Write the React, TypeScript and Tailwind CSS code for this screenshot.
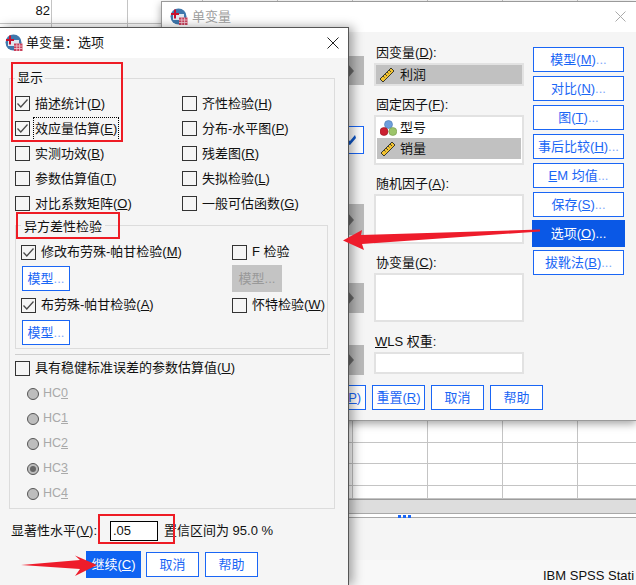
import React from 'react';

const rowLabel = (text: string, key: string, after = '') => (
    <>
        {text}(<u>{key}</u>){after}
    </>
);

const Dots = () => <span className="text-[#7fa8fb]">...</span>;

const AppIcon = () => (
    <svg width="18" height="18" viewBox="0 0 18 18" className="shrink-0">
        <circle cx="8.5" cy="8.5" r="8" fill="#3f78ad" />
        <path d="M3 6h11v6H3z" fill="#dfe8f0" />
        <path d="M1 5h8V7H1zM4 1.5h2v9H4z" fill="#c8102e" />
        <path d="M9 9.5h8.5V17H9z" fill="#c9405a" />
        <path d="M9 12h8.5M9 14.5h8.5M11.8 9.5V17M14.6 9.5V17" stroke="#f3cdd5" strokeWidth="0.8" />
    </svg>
);

const RulerIcon = () => (
    <svg width="16" height="16" viewBox="0 0 16 16" className="shrink-0">
        <path d="M1 12 12 1l3 3L4 15z" fill="#f2c230" stroke="#3a3a2a" strokeWidth="1" />
        <path d="M4 9l1.5 1.5M6 7l2 2M8 5l1.5 1.5M10 3l2 2" stroke="#3a3a2a" strokeWidth="0.9" />
    </svg>
);

const NominalIcon = () => (
    <svg width="17" height="16" viewBox="0 0 17 16" className="shrink-0">
        <circle cx="8.5" cy="4.5" r="4" fill="#6f9fdc" stroke="#4a78b0" strokeWidth="0.6" />
        <circle cx="4" cy="11.5" r="4" fill="#cc2030" stroke="#98141f" strokeWidth="0.6" />
        <circle cx="12.8" cy="11.5" r="4" fill="#9cc46a" stroke="#74984a" strokeWidth="0.6" />
    </svg>
);

const Check = ({ checked = false, focus = false, children }: { checked?: boolean; focus?: boolean; children: React.ReactNode }) => (
    <div className="flex items-center h-[14px] whitespace-nowrap">
        <span className="w-[15px] h-[15px] shrink-0 border border-[#333] flex items-center justify-center">
            {checked && (
                <svg width="13" height="13" viewBox="0 0 13 13">
                    <path d="M1.5 6.5 4.8 10 11.5 2.5" fill="none" stroke="#4a4a4a" strokeWidth="1.3" />
                </svg>
            )}
        </span>
        <span className={focus ? 'ml-[5px] inline-block leading-[20px] outline-1 outline-dotted outline-black outline-offset-[1px]' : 'ml-[5px]'}>
            {children}
        </span>
    </div>
);

const Radio = ({ label, mark, on = false }: { label: string; mark: string; on?: boolean }) => (
    <div className="flex items-center h-[25px]">
        <span className="w-[12px] h-[12px] rounded-full border border-[#555] bg-[#bdbdbd] flex items-center justify-center">
            {on && <span className="w-[6px] h-[6px] rounded-full bg-[#666]" />}
        </span>
        <span className="ml-[4px] text-[12.5px] text-[#a9a9a9]">
            {label}
            <u>{mark}</u>
        </span>
    </div>
);

const Btn = ({ w = 'w-[53px]', children }: { w?: string; children: React.ReactNode }) => (
    <button className={`${w} h-[25px] shrink-0 border border-[#1a66f5] bg-white text-[#1a66f5] text-[13px] whitespace-nowrap flex items-center justify-center`}>
        {children}
    </button>
);

const SideArrow = ({ mt, h }: { mt: string; h: string }) => (
    <div className={`${mt} ${h} w-[29px] bg-[#b9b9b9] flex items-center justify-center`}>
        <svg width="12" height="16" viewBox="0 0 12 16">
            <path d="M0 0 7 8 0 16z" fill="#6a6a6a" transform="translate(3 0)" />
        </svg>
    </div>
);

const Sheet = () => {
    const cells = Array.from({ length: 23 * 9 });
    return (
        <div className="grid grid-cols-[52px_76px_repeat(7,75px)] grid-rows-[24px_repeat(18,22px)_23px_21px_22px_13px] h-[499px] w-[636px] overflow-hidden bg-white">
            {cells.map((_, i) => (
                <div key={i} className="border-r border-b border-[#c4c4c4] text-right text-[13px] leading-[22px] pr-[1px] text-[#111]">
                    {i === 0 ? '82' : ''}
                </div>
            ))}
        </div>
    );
};

const BackDialog = () => (
    <div className="absolute left-[161px] top-[1px] w-[475px] h-[420px] border-t border-l border-b border-[#9a9a9a] bg-[#f5f5f5] shadow-[0_3px_8px_rgba(0,0,0,0.35)] flex flex-col">
        <div className="h-[30px] bg-white flex items-center pl-[8px] shrink-0">
            <AppIcon />
            <span className="ml-[4px] text-[#a0a0a0]">单变量</span>
            <svg width="11" height="11" viewBox="0 0 11 11" className="ml-auto mr-[10px] -mt-[1px]">
                <path d="M.5.5l10 10M10.5.5l-10 10" stroke="#aaa" strokeWidth="1" />
            </svg>
        </div>
        <div className="flex">
            <div className="w-[212px] pr-[10px] pt-[24px] flex flex-col items-end">
                <SideArrow mt="mt-0" h="h-[29px]" />
                <div className="mt-[41px] w-[29px] h-[28px] border border-[#1a66f5] bg-white flex items-center">
                    <svg width="16" height="16" viewBox="0 0 16 16" className="ml-[5px]">
                        <path d="M4 6 9 9 14 3 15 6 9 13 4 11z" fill="#0f57c9" />
                    </svg>
                </div>
                <SideArrow mt="mt-[50px]" h="h-[31px]" />
                <SideArrow mt="mt-[48px]" h="h-[30px]" />
                <SideArrow mt="mt-[32px]" h="h-[30px]" />
            </div>
            <div className="w-[150px] pt-[10px]">
                <div className="h-[20px] leading-[22px] pl-[2px]">{rowLabel('因变量', 'D', ':')}</div>
                <div className="mt-[1px] h-[23px] border-2 border-[#e2e2e2] bg-[#c1c1c1] flex items-center pl-[3px]">
                    <RulerIcon />
                    <span className="ml-[5px]">利润</span>
                </div>
                <div className="mt-[8px] h-[20px] leading-[22px] pl-[2px]">{rowLabel('固定因子', 'F', ':')}</div>
                <div className="mt-[1px] h-[50px] border-2 border-[#e2e2e2] bg-white px-[1px] pt-[1px]">
                    <div className="h-[20px] flex items-center pl-[3px]">
                        <NominalIcon />
                        <span className="ml-[3px]">型号</span>
                    </div>
                    <div className="h-[21px] bg-[#c1c1c1] flex items-center pl-[3px]">
                        <RulerIcon />
                        <span className="ml-[4px]">销量</span>
                    </div>
                </div>
                <div className="mt-[8px] h-[20px] leading-[22px] pl-[2px]">{rowLabel('随机因子', 'A', ':')}</div>
                <div className="mt-[1px] h-[50px] border-2 border-[#e2e2e2] bg-white" />
                <div className="mt-[8px] h-[20px] leading-[22px] pl-[2px]">{rowLabel('协变量', 'C', ':')}</div>
                <div className="mt-[1px] h-[49px] border-2 border-[#e2e2e2] bg-white" />
                <div className="mt-[9px] h-[20px] leading-[22px] pl-[1px]">
                    <u>W</u>LS 权重:
                </div>
                <div className="mt-[1px] h-[22px] border-2 border-[#e2e2e2] bg-white" />
            </div>
            <div className="ml-[9px] w-[91px] pt-[15px] flex flex-col gap-[4px]">
                <Btn w="w-[91px]">模型(<u>M</u>)<Dots /></Btn>
                <Btn w="w-[91px]">对比(<u>N</u>)<Dots /></Btn>
                <Btn w="w-[91px]">图(<u>T</u>)<Dots /></Btn>
                <Btn w="w-[91px]">事后比较(<u>H</u>)<Dots /></Btn>
                <Btn w="w-[91px]"><u>E</u>M 均值<Dots /></Btn>
                <Btn w="w-[91px]">保存(<u>S</u>)<Dots /></Btn>
                <button className="-mx-[1px] -my-[1px] w-[93px] h-[27px] bg-[#0a58e6] text-white text-[13px] flex items-center justify-center">
                    选项(<u>O</u>)...
                </button>
                <Btn w="w-[91px]">拔靴法(<u>B</u>)<Dots /></Btn>
            </div>
        </div>
        <div className="mt-[10px] pl-[151px] flex gap-[6px]">
            <Btn>粘贴(<u>P</u>)</Btn>
            <Btn>重置(<u>R</u>)</Btn>
            <Btn>取消</Btn>
            <Btn>帮助</Btn>
        </div>
    </div>
);

const OptionsDialog = () => (
    <div className="absolute left-0 top-[27px] w-[349px] h-[558px] border-t border-r border-[#555] bg-[#f5f5f5] shadow-[4px_0_10px_rgba(0,0,0,0.35)]">
        <div className="h-[30px] bg-white flex items-center pl-[5px]">
            <AppIcon />
            <span className="ml-[3px]">单变量：选项</span>
            <svg width="12" height="12" viewBox="0 0 12 12" className="ml-auto mr-[9px]">
                <path d="M.5.5l11 11M11.5.5l-11 11" stroke="#222" strokeWidth="1" />
            </svg>
        </div>
        <div className="h-[11px]" />
        <fieldset className="ml-[9px] w-[326px] border border-[#dcdcdc] pl-[5px] pb-[2px]">
            <legend className="px-[2px] h-[18px] leading-[18px]">显示</legend>
            <div className="grid grid-cols-[167px_1fr] auto-rows-[25px] items-center pt-[4px]">
                <Check checked>{rowLabel('描述统计', 'D')}</Check>
                <Check>{rowLabel('齐性检验', 'H')}</Check>
                <Check checked focus>{rowLabel('效应量估算', 'E')}</Check>
                <Check>{rowLabel('分布-水平图', 'P')}</Check>
                <Check>{rowLabel('实测功效', 'B')}</Check>
                <Check>{rowLabel('残差图', 'R')}</Check>
                <Check>{rowLabel('参数估算值', 'T')}</Check>
                <Check>{rowLabel('失拟检验', 'L')}</Check>
                <Check>{rowLabel('对比系数矩阵', 'O')}</Check>
                <Check>{rowLabel('一般可估函数', 'G')}</Check>
            </div>
            <fieldset className="w-[313px] mt-[2px] border border-[#dcdcdc] pl-[5px] pb-[3px]">
                <legend className="px-[3px] h-[14px] leading-[18px]">异方差性检验</legend>
                <div className="grid grid-cols-[211px_1fr] gap-y-[7px] items-center pt-[13px]">
                    <Check checked>{rowLabel('修改布劳殊-帕甘检验', 'M')}</Check>
                    <Check>F 检验</Check>
                    <div className="pl-[1px]">
                        <Btn w="w-[48px]">模型<Dots /></Btn>
                    </div>
                    <div className="h-[27px] -my-[1px] w-[50px] bg-[#c4c4c4] text-[#999] flex items-center justify-center">模型...</div>
                    <Check checked>{rowLabel('布劳殊-帕甘检验', 'A')}</Check>
                    <Check>{rowLabel('怀特检验', 'W')}</Check>
                    <div className="pl-[1px] mt-[1px]">
                        <Btn w="w-[48px]">模型<Dots /></Btn>
                    </div>
                </div>
            </fieldset>
            <div className="mt-[5px] h-px w-[315px] bg-[#cfcfcf]" />
            <div className="mt-[6px]">
                <Check>{rowLabel('具有稳健标准误差的参数估算值', 'U')}</Check>
            </div>
            <div className="mt-[6px] pl-[12px]">
                <Radio label="HC" mark="0" />
                <Radio label="HC" mark="1" />
                <Radio label="HC" mark="2" />
                <Radio label="HC" mark="3" on />
                <Radio label="HC" mark="4" />
            </div>
        </fieldset>
        <div className="mt-[12px] pl-[11px] flex items-center h-[19px]">
            <span className="w-[99px] whitespace-nowrap">{rowLabel('显著性水平', 'V', ':')}</span>
            <input readOnly value=".05" className="w-[48px] h-[20px] border border-black bg-white pl-[2px] text-[13px]" />
            <span className="ml-[6px] whitespace-nowrap">置信区间为 95.0 %</span>
        </div>
        <div className="mt-[11px] pl-[86px] flex items-center h-[27px]">
            <button className="w-[55px] h-[27px] bg-[#0f63f2] text-white text-[13px]">
                继续(<u>C</u>)
            </button>
            <div className="ml-[5px]"><Btn>取消</Btn></div>
            <div className="ml-[6px]"><Btn>帮助</Btn></div>
        </div>
    </div>
);

const Annotations = () => (
    <>
        <div className="absolute left-[11px] top-[62px] w-[112px] h-[80px] border-2 border-[#ee1c25]" />
        <div className="absolute left-[16px] top-[212px] w-[104px] h-[27px] border-2 border-[#ee1c25]" />
        <div className="absolute left-[98px] top-[514px] w-[77px] h-[30px] border-2 border-[#ee1c25]" />
        <svg width="636" height="585" viewBox="0 0 636 585" className="absolute left-0 top-0 pointer-events-none">
            <path d="M343 240.5 362 230 361 235 540 229.5 540 231.5 362 244 364 250z" fill="#ee1c2b" />
            <path d="M21 565 80 560 75 555.5 97 565 75 576 80 569z" fill="#ee1c2b" />
        </svg>
    </>
);

export default function App() {
    return (
        <div className="relative w-[636px] h-[585px] overflow-hidden bg-white text-[13px] text-[#111] font-['Liberation_Sans','Noto_Sans_CJK_SC',sans-serif]">
            <div className="flex flex-col h-full">
                <Sheet />
                <div className="h-[14px] bg-[#dddddd] border-t border-[#9c9c9c]" />
                <div className="relative h-[5px] bg-white border-t border-b border-[#a8a8a8]">
                    <div className="absolute left-[398px] top-[1px] flex gap-[2px]">
                        <span className="w-[3px] h-[3px] bg-[#1a66f5]" />
                        <span className="w-[3px] h-[3px] bg-[#1a66f5]" />
                        <span className="w-[3px] h-[3px] bg-[#1a66f5]" />
                    </div>
                </div>
                <div className="flex-1 bg-[#f5f5f5]" />
                <div className="h-[25px] bg-[#f8f8f8] pl-[543px] pt-[6px] whitespace-nowrap">IBM SPSS Stati</div>
            </div>
            <BackDialog />
            <OptionsDialog />
            <Annotations />
        </div>
    );
}
